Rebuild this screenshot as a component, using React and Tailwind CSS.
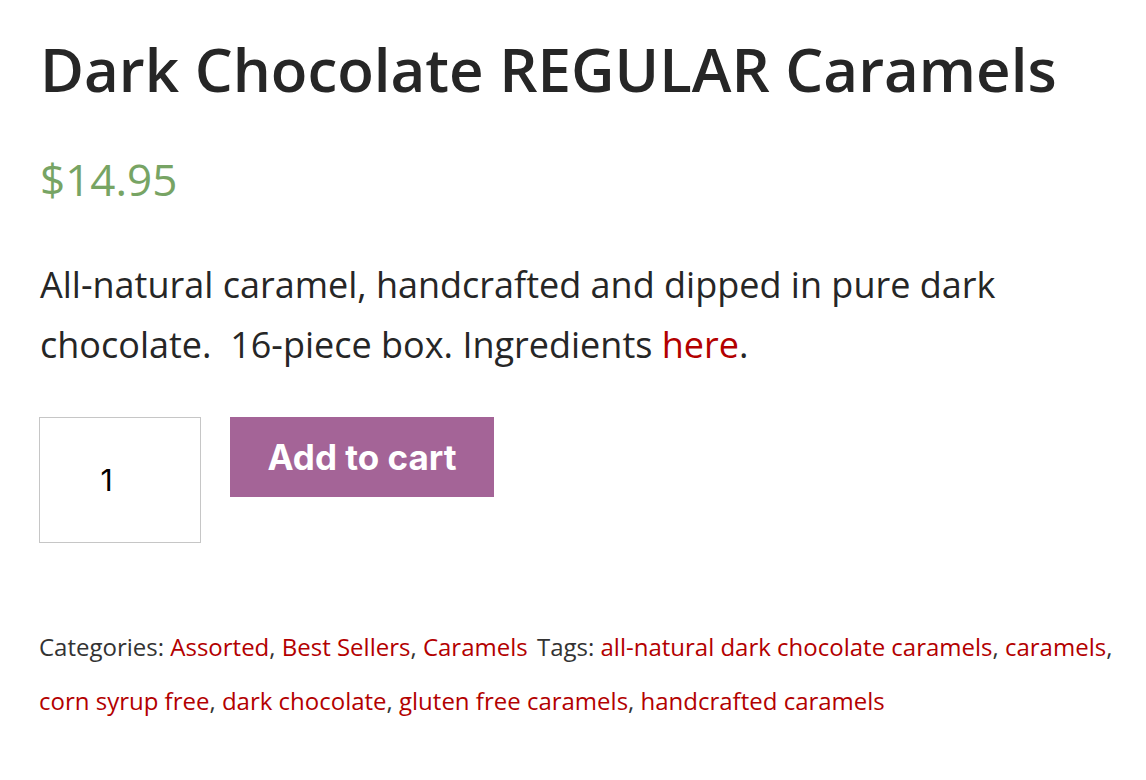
const cats = ['Assorted', 'Best Sellers', 'Caramels'];
const tags = [
  'all-natural dark chocolate caramels',
  'caramels',
  'corn syrup free',
  'dark chocolate',
  'gluten free caramels',
  'handcrafted caramels',
];

function LinkList({ items }) {
  return items.map((t, i) => (
    <span key={t}>
      <a href="#" className="text-[#b30000]">{t}</a>
      {i < items.length - 1 && ', '}
    </span>
  ));
}

export default function App() {
  return (
    <div className="min-h-screen bg-white pl-[40px] pr-[20px] pt-[30px] text-[#262626] font-['Open_Sans',sans-serif]">
      <h1 className="text-[60px] font-semibold leading-[1.3]">Dark Chocolate REGULAR Caramels</h1>
      <p className="mt-[43px] text-[44px] leading-[1.3] text-[#77a464]">$14.95</p>
      <p className="mt-[47px] text-[36px] leading-[60px] text-[#262626]">
        All-natural caramel, handcrafted and dipped in pure dark chocolate.&nbsp; 16-piece box. Ingredients{' '}
        <a href="#" className="text-[#b30000]">here</a>.
      </p>
      <form className="mt-[42px] flex items-start gap-[29px]">
        <input
          type="number"
          defaultValue="1"
          className="-ml-px h-[126px] w-[162px] border border-[#c6c6c6] pr-[12px] text-center text-[30px] text-black font-['Inter',sans-serif] outline-none [appearance:textfield]"
        />
        <button
          type="button"
          className="h-[80px] w-[264px] bg-[#a46497] text-[35px] font-bold text-white font-['Inter',sans-serif]"
        >
          Add to cart
        </button>
      </form>
      <div className="-ml-px mt-[77px] text-[24px] leading-[54px] text-[#333]">
        <span>Categories: <LinkList items={cats} /></span>{' '}
        <span className="ml-[3px]">Tags: <LinkList items={tags} /></span>
      </div>
    </div>
  );
}
